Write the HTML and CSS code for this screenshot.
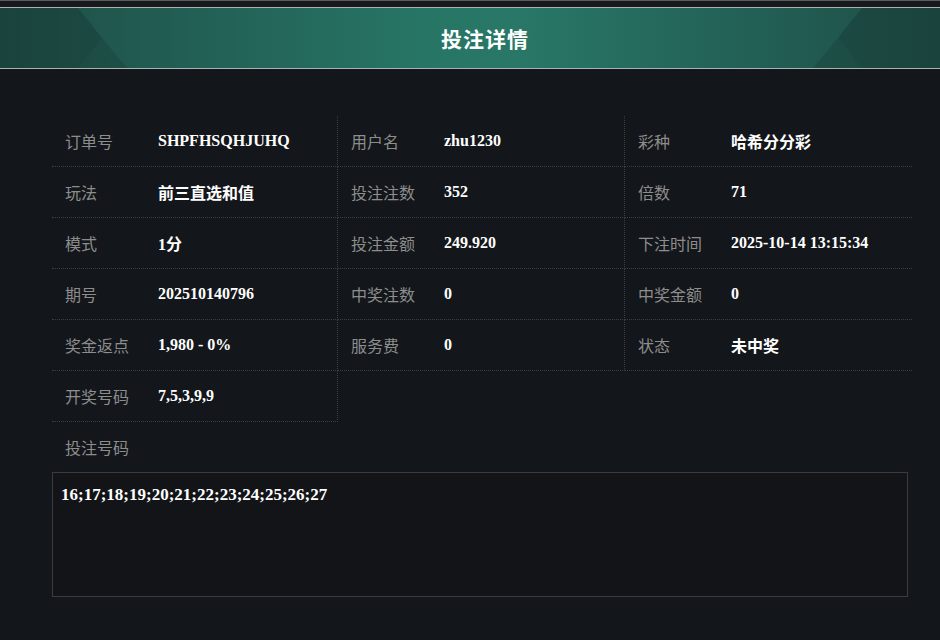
FILE: index.html
```html
<!DOCTYPE html>
<html lang="zh-CN">
<head>
  <meta charset="UTF-8" />
  <meta name="viewport" content="width=device-width, initial-scale=1" />
  <title>投注详情</title>
  <link rel="stylesheet" href="styles.css">
</head>
<body>

  <div class="topbar"></div>

  <div class="header">
    <svg class="deco deco-left" viewBox="0 0 130 60" preserveAspectRatio="none">
      <polygon points="0,0 78,0 102,30 78,60 0,60" fill="rgba(20,50,45,0.35)" />
      <polygon points="102,30 127,60 78,60" fill="rgba(20,50,45,0.25)" />
    </svg>
    <h1>投注详情</h1>
    <svg class="deco deco-right" viewBox="0 0 130 60" preserveAspectRatio="none">
      <polygon points="130,0 52,0 28,30 52,60 130,60" fill="rgba(20,50,45,0.35)" />
      <polygon points="28,30 3,60 52,60" fill="rgba(20,50,45,0.25)" />
    </svg>
  </div>

  <div class="content">
    <div class="grid">
      <div class="cell"><span class="label">订单号</span><span class="value">SHPFHSQHJUHQ</span></div>
      <div class="cell"><span class="label">用户名</span><span class="value">zhu1230</span></div>
      <div class="cell"><span class="label">彩种</span><span class="value">哈希分分彩</span></div>

      <div class="cell"><span class="label">玩法</span><span class="value">前三直选和值</span></div>
      <div class="cell"><span class="label">投注注数</span><span class="value">352</span></div>
      <div class="cell"><span class="label">倍数</span><span class="value">71</span></div>

      <div class="cell"><span class="label">模式</span><span class="value">1分</span></div>
      <div class="cell"><span class="label">投注金额</span><span class="value">249.920</span></div>
      <div class="cell"><span class="label">下注时间</span><span class="value">2025-10-14 13:15:34</span></div>

      <div class="cell"><span class="label">期号</span><span class="value">202510140796</span></div>
      <div class="cell"><span class="label">中奖注数</span><span class="value">0</span></div>
      <div class="cell"><span class="label">中奖金额</span><span class="value">0</span></div>

      <div class="cell"><span class="label">奖金返点</span><span class="value">1,980 - 0%</span></div>
      <div class="cell"><span class="label">服务费</span><span class="value">0</span></div>
      <div class="cell"><span class="label">状态</span><span class="value">未中奖</span></div>

      <div class="cell"><span class="label">开奖号码</span><span class="value">7,5,3,9,9</span></div>
    </div>

    <div class="bet-label">投注号码</div>
    <div class="bet-box">16;17;18;19;20;21;22;23;24;25;26;27</div>
  </div>

</body>
</html>
```

FILE: styles.css
```css
* {
  box-sizing: border-box;
}
body {
  margin: 0;
  background: #13161a;
  font-family: "Noto Sans CJK SC", sans-serif;
  width: 940px;
  height: 640px;
  overflow: hidden;
}
.topbar {
  height: 7px;
  background: #17191c;
  border-top: 1px solid #5a5c5e;
}
.header {
  position: relative;
  height: 62px;
  border-top: 1px solid #a9b3b1;
  border-bottom: 1px solid #a9b3b1;
  background: linear-gradient(90deg, #1e4d46 0%, #277565 45%, #287767 55%, #1e4d46 100%);
  display: flex;
  align-items: center;
  justify-content: center;
  padding-left: 30px;
  overflow: hidden;
}
.header h1 {
  margin: 0;
  color: #fff;
  font-size: 21px;
  font-weight: bold;
  letter-spacing: 1px;
}
.deco {
  position: absolute;
  top: 0;
  width: 130px;
  height: 60px;
}
.deco-left {
  left: 0;
}
.deco-right {
  right: 0;
}
.content {
  padding: 47px 28px 0 52px;
}
.grid {
  display: grid;
  grid-template-columns: 286px 287px 287px;
}
.cell {
  height: 51px;
  display: flex;
  align-items: center;
  padding-left: 13px;
  border-bottom: 1px dotted #3b3e42;
  border-right: 1px dotted #3b3e42;
}
.cell:nth-child(3n) {
  border-right: none;
}
.label {
  width: 93px;
  flex-shrink: 0;
  color: #8d8d8d;
  font-size: 16px;
}
.value {
  color: #fff;
  font-family: "Liberation Serif", "Noto Sans CJK SC", serif;
  font-weight: bold;
  font-size: 16px;
}
.bet-label {
  color: #8d8d8d;
  font-size: 16px;
  padding: 13px 0 0 13px;
  height: 50px;
}
.bet-box {
  width: 856px;
  height: 125px;
  border: 1px solid #3a3c3f;
  background: #121417;
  color: #fff;
  font-family: "Liberation Serif", serif;
  font-weight: bold;
  font-size: 17px;
  padding: 12px 8px;
}
```
